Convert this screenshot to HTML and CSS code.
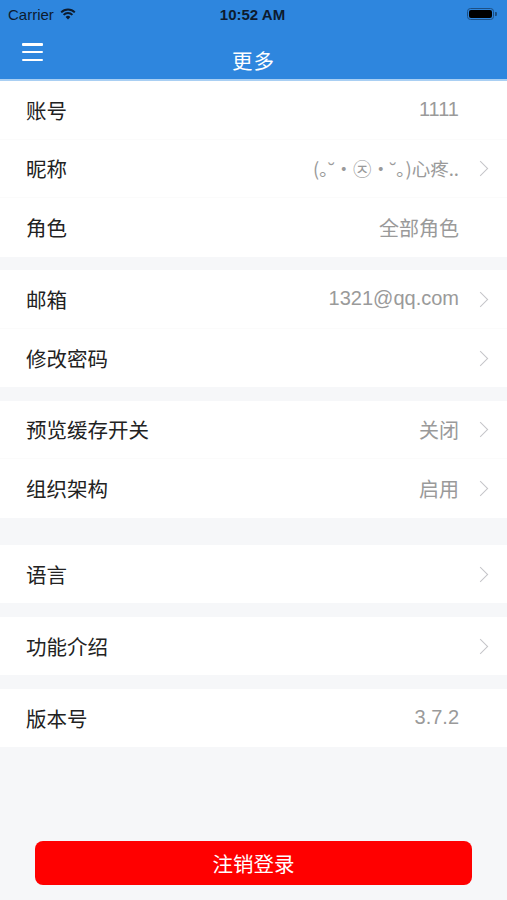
FILE: index.html
```html
<!DOCTYPE html>
<html lang="zh">
<head>
    <meta charset="UTF-8">
    <meta name="viewport" content="width=device-width, initial-scale=1.0">
    <title>更多</title>
    <link rel="stylesheet" href="styles.css">
</head>
<body>
    <div class="app">
        <div class="topbar">
            <div class="status-bar">
                <div class="carrier">
                    Carrier
                    <svg class="wifi" width="16" height="12" viewBox="0 0 16 12">
                        <path d="M8 11.5 L5.6 8.9 A3.4 3.4 0 0 1 10.4 8.9 Z" fill="#0d1b2e"/>
                        <path d="M3.6 6.9 A6.2 6.2 0 0 1 12.4 6.9" stroke="#0d1b2e" stroke-width="2" fill="none"/>
                        <path d="M1.2 4.4 A9.6 9.6 0 0 1 14.8 4.4" stroke="#0d1b2e" stroke-width="2" fill="none"/>
                    </svg>
                </div>
                <div class="time">10:52 AM</div>
                <div class="battery">
                    <span class="battery-body"><span class="battery-fill"></span></span>
                    <span class="battery-cap"></span>
                </div>
            </div>
            <div class="nav-bar">
                <button class="menu-btn" aria-label="菜单">
                    <span></span><span></span><span></span>
                </button>
                <div class="nav-title">更多</div>
            </div>
        </div>

        <div class="content">
            <div class="group">
                <div class="row">
                    <span class="label">账号</span>
                    <span class="value">1111</span>
                    <span class="arrow-space"></span>
                </div>
                <div class="row">
                    <span class="label">昵称</span>
                    <span class="value value-cjk">(｡˘•㉨•˘｡)心疼..</span>
                    <span class="arrow"></span>
                </div>
                <div class="row">
                    <span class="label">角色</span>
                    <span class="value">全部角色</span>
                    <span class="arrow-space"></span>
                </div>
            </div>

            <div class="group">
                <div class="row">
                    <span class="label">邮箱</span>
                    <span class="value">1321@qq.com</span>
                    <span class="arrow"></span>
                </div>
                <div class="row">
                    <span class="label">修改密码</span>
                    <span class="value"></span>
                    <span class="arrow"></span>
                </div>
            </div>

            <div class="group">
                <div class="row">
                    <span class="label">预览缓存开关</span>
                    <span class="value">关闭</span>
                    <span class="arrow"></span>
                </div>
                <div class="row">
                    <span class="label">组织架构</span>
                    <span class="value">启用</span>
                    <span class="arrow"></span>
                </div>
            </div>

            <div class="group group-wide">
                <div class="row">
                    <span class="label">语言</span>
                    <span class="value"></span>
                    <span class="arrow"></span>
                </div>
            </div>

            <div class="group">
                <div class="row">
                    <span class="label">功能介绍</span>
                    <span class="value"></span>
                    <span class="arrow"></span>
                </div>
            </div>

            <div class="group">
                <div class="row">
                    <span class="label">版本号</span>
                    <span class="value">3.7.2</span>
                    <span class="arrow-space"></span>
                </div>
            </div>
        </div>

        <div class="footer">
            <button class="logout-btn">注销登录</button>
        </div>
    </div>
</body>
</html>
```

FILE: styles.css
```css
* {
    margin: 0;
    padding: 0;
    box-sizing: border-box;
}

body {
    font-family: "Noto Sans CJK SC", "Noto Sans", "Liberation Sans", sans-serif;
    background: #f6f7f9;
    color: #222;
    width: 507px;
    height: 900px;
    overflow: hidden;
}

.app {
    height: 900px;
    display: flex;
    flex-direction: column;
}

.topbar {
    background: #2e86de;
    border-bottom: 2px solid #a9cff3;
}

.status-bar {
    height: 28px;
    display: flex;
    align-items: center;
    justify-content: space-between;
    padding: 0 10px 0 8px;
    font-family: "Liberation Sans", "Noto Sans", sans-serif;
    font-size: 15px;
    color: #0d1b2e;
}

.carrier {
    display: flex;
    align-items: center;
    gap: 6px;
    width: 120px;
}

.time {
    font-weight: bold;
    font-size: 15px;
}

.battery {
    width: 120px;
    display: flex;
    justify-content: flex-end;
    align-items: center;
}

.battery-body {
    width: 27px;
    height: 12px;
    border: 1px solid #1c4f84;
    border-radius: 3.5px;
    padding: 1px;
    display: flex;
}

.battery-fill {
    flex: 1;
    background: #000;
    border-radius: 2px;
}

.battery-cap {
    width: 2px;
    height: 4px;
    background: #1c4f84;
    border-radius: 0 1px 1px 0;
    margin-left: 1px;
}

.nav-bar {
    height: 51px;
    display: flex;
    align-items: center;
    justify-content: center;
    position: relative;
}

.menu-btn {
    position: absolute;
    left: 22px;
    top: 13px;
    width: 22px;
    height: 22px;
    background: none;
    border: none;
    display: flex;
    flex-direction: column;
    justify-content: space-between;
    padding: 2px 0;
}

.menu-btn span {
    display: block;
    width: 21px;
    height: 2.5px;
    background: #fff;
    border-radius: 1px;
}

.nav-title {
    color: #fff;
    font-size: 20.5px;
    margin-top: 12px;
    letter-spacing: 1px;
}

.content {
    flex: 1;
}

.group {
    background: #fff;
    margin-bottom: 13.5px;
}

.group-wide {
    margin-top: 27px;
}

.row {
    height: 58.5px;
    display: flex;
    align-items: center;
    padding: 0 18px 0 26px;
    border-bottom: 1px solid #fbfbfb;
}

.row:last-child {
    border-bottom: none;
}

.label {
    font-size: 20.5px;
    color: #222;
}

.value {
    flex: 1;
    text-align: right;
    font-family: "Liberation Sans", "Noto Sans CJK SC", sans-serif;
    font-size: 20px;
    color: #9a9a9a;
    margin-right: 18px;
    white-space: nowrap;
}

.value-cjk {
    font-family: "Noto Sans CJK SC", sans-serif;
    font-size: 18.5px;
}

.arrow,
.arrow-space {
    width: 12px;
    height: 16px;
}

.arrow {
    position: relative;
}

.arrow::after {
    content: "";
    position: absolute;
    left: -2px;
    top: 3px;
    width: 10px;
    height: 10px;
    border-top: 1.5px solid #c4c4c8;
    border-right: 1.5px solid #c4c4c8;
    transform: rotate(45deg);
}

.footer {
    padding: 0 35px 15px;
}

.logout-btn {
    width: 100%;
    height: 44px;
    background: #ff0000;
    color: #fff;
    border: none;
    border-radius: 8px;
    font-family: "Noto Sans CJK SC", sans-serif;
    font-size: 20.5px;
}
```
